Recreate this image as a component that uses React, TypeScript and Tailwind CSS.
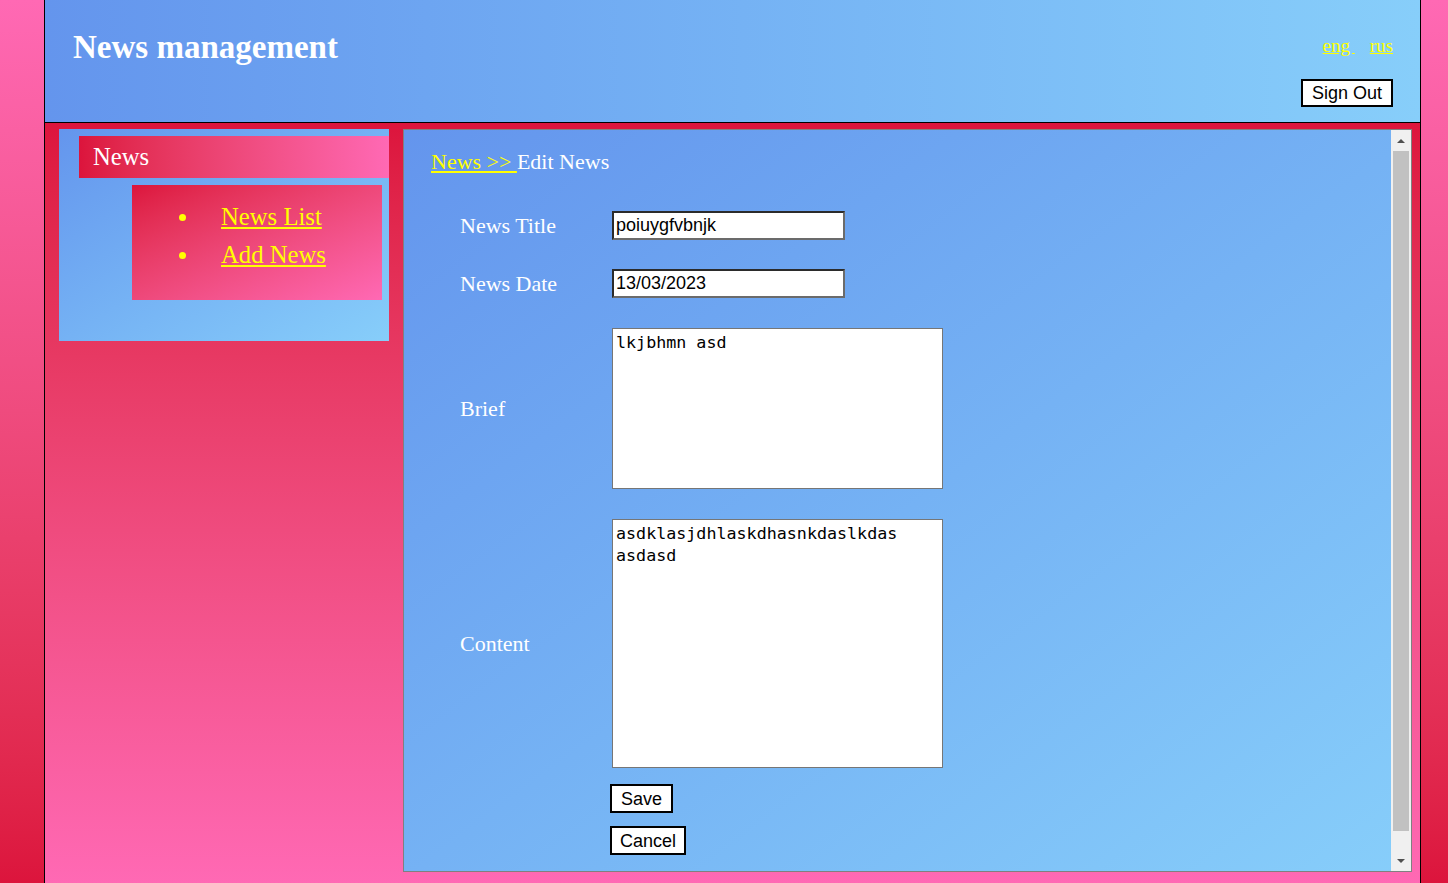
import React from 'react';

const inputCls =
  "w-[233px] h-[29px] border-2 border-t-[#2b2b2b] border-l-[#2b2b2b] border-b-[#6b6b6b] border-r-[#6b6b6b] bg-white pl-[2px] text-[18px] leading-[22px] text-black font-['Liberation_Sans',Arial,sans-serif] outline-none";
const areaCls =
  "w-[331px] resize-none border border-[#767676] bg-white p-[2px] pl-[3px] text-[16.7px] leading-[22px] text-black font-['DejaVu_Sans_Mono',monospace] outline-none";

export default function App() {
  return (
    <div className="min-h-[883px] bg-gradient-to-b from-[#ff69b4] to-[#dc143c] font-['Liberation_Serif',serif]">
      <div className="ml-[44px] w-[1377px] border-x border-black">
        {/* Header */}
        <header className="h-[123px] border-b border-black bg-gradient-to-r from-[#6495ed] to-[#87cefa] flex justify-between pl-[28px] pr-[27px]">
          <h1 className="pt-[28px] text-[33px] leading-[38px] font-bold text-white">News management</h1>
          <div className="flex flex-col items-end pt-[35px]">
            <div className="flex text-[19px] leading-[22px] text-[#ffff00]">
              <a href="#" className="underline">eng&nbsp;</a>
              <a href="#" className="underline ml-[15px]">rus</a>
            </div>
            <button className="mt-[22px] h-[28px] border-2 border-black bg-white px-[9px] text-[18px] leading-[22px] text-black font-['Liberation_Sans',Arial,sans-serif]">
              Sign Out
            </button>
          </div>
        </header>

        {/* Body */}
        <div className="flex items-start gap-[14px] bg-gradient-to-b from-[#dc143c] to-[#ff69b4] pt-[6px] pl-[14px] pr-[8px] pb-[12px]">
          {/* Sidebar */}
          <aside className="w-[330px] h-[212px] shrink-0 bg-gradient-to-br from-[#6495ed] to-[#87cefa] pl-[20px] pt-[7px]">
            <div className="h-[42px] bg-gradient-to-r from-[#dc143c] to-[#ff69b4] pl-[14px] text-[24.7px] leading-[42px] text-white">
              News
            </div>
            <ul className="ml-[53px] mt-[7px] w-[250px] h-[115px] bg-gradient-to-br from-[#dc143c] to-[#ff69b4] pt-[13px] pl-[47px] text-[24.7px] leading-[38px] text-[#ffff00]">
              <li className="flex items-center">
                <span className="w-[7px] h-[7px] rounded-full bg-[#ffff00]" />
                <a href="#" className="ml-[35px] underline">News List</a>
              </li>
              <li className="flex items-center">
                <span className="w-[7px] h-[7px] rounded-full bg-[#ffff00]" />
                <a href="#" className="ml-[35px] underline">Add News</a>
              </li>
            </ul>
          </aside>

          {/* Content */}
          <main className="flex-1 h-[743px] flex border border-[#808080] bg-gradient-to-br from-[#6495ed] to-[#87cefa] overflow-hidden">
            <div className="flex-1 pl-[27px] pt-[19px]">
              <div className="text-[22px] leading-[26px] text-white">
                <a href="#" className="text-[#ffff00] underline">News &gt;&gt; </a>Edit News
              </div>

              <div className="ml-[29px] mt-[36px] grid grid-cols-[152px_auto] items-center justify-start text-[22px] leading-[25px] text-white">
                <label>News Title</label>
                <input defaultValue="poiuygfvbnjk" className={inputCls} />

                <label className="mt-[29px]">News Date</label>
                <input defaultValue="13/03/2023" className={`mt-[29px] ${inputCls}`} />

                <label className="mt-[30px]">Brief</label>
                <textarea defaultValue="lkjbhmn asd" className={`mt-[30px] h-[161px] ${areaCls}`} />

                <label className="mt-[30px]">Content</label>
                <textarea
                  defaultValue={'asdklasjdhlaskdhasnkdaslkdas\nasdasd'}
                  className={`mt-[30px] h-[249px] ${areaCls}`}
                />

                <span />
                <div className="mt-[16px] -ml-[2px] flex flex-col items-start gap-[13px] font-['Liberation_Sans',Arial,sans-serif]">
                  <button className="h-[29px] border-2 border-black bg-white px-[9px] text-[18px] leading-[22px] text-black">Save</button>
                  <button className="h-[29px] border-2 border-black bg-white px-[8px] text-[18px] leading-[22px] text-black">Cancel</button>
                </div>
              </div>
            </div>

            {/* Scrollbar */}
            <div className="w-[20px] shrink-0 flex flex-col bg-[#f0f0f0]">
              <div className="h-[21px] flex items-center justify-center">
                <div className="w-0 h-0 border-x-[4px] border-x-transparent border-b-[4px] border-b-[#505050]" />
              </div>
              <div className="mx-[2px] h-[680px] bg-[#c1c1c1]" />
              <div className="flex-1" />
              <div className="h-[21px] flex items-center justify-center">
                <div className="w-0 h-0 border-x-[4px] border-x-transparent border-t-[4px] border-t-[#505050]" />
              </div>
            </div>
          </main>
        </div>
      </div>
    </div>
  );
}
